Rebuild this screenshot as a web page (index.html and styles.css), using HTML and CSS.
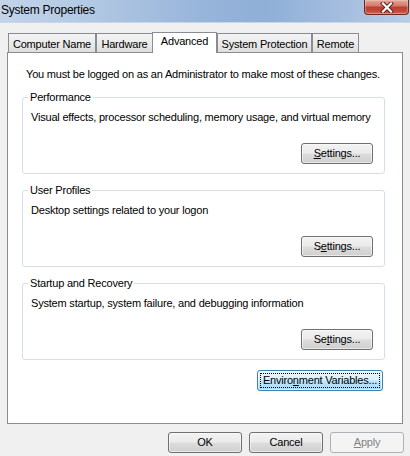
FILE: index.html
```html
<!DOCTYPE html>
<html>
<head>
<meta charset="utf-8">
<link rel="stylesheet" href="styles.css">
</head>
<body>
<div class="window">
  <div class="titlebar">
    <span class="title">System Properties</span>
    <div class="close">
      <svg width="14" height="11" viewBox="0 0 14 11">
        <path d="M3 1.5 L11 9.5 M11 1.5 L3 9.5" stroke="#5a1d16" stroke-width="4" stroke-linecap="square"/>
        <path d="M3 1.5 L11 9.5 M11 1.5 L3 9.5" stroke="#ffffff" stroke-width="2.2" stroke-linecap="square"/>
      </svg>
    </div>
  </div>
  <div class="dialog">
    <div class="tabs">
      <div class="tab tab-cn">Computer Name</div>
      <div class="tab tab-hw">Hardware</div>
      <div class="tab tab-adv active">Advanced</div>
      <div class="tab tab-sp">System Protection</div>
      <div class="tab tab-rm">Remote</div>
    </div>
    <div class="panel">
      <p class="note">You must be logged on as an Administrator to make most of these changes.</p>
      <fieldset class="group">
        <legend>Performance</legend>
        <p class="desc">Visual effects, processor scheduling, memory usage, and virtual memory</p>
        <div class="actions"><button class="btn settings"><u>S</u>ettings...</button></div>
      </fieldset>
      <fieldset class="group">
        <legend>User Profiles</legend>
        <p class="desc">Desktop settings related to your logon</p>
        <div class="actions"><button class="btn settings">S<u>e</u>ttings...</button></div>
      </fieldset>
      <fieldset class="group">
        <legend>Startup and Recovery</legend>
        <p class="desc">System startup, system failure, and debugging information</p>
        <div class="actions"><button class="btn settings">Se<u>t</u>tings...</button></div>
      </fieldset>
      <div class="env-row"><button class="btn env focused">Enviro<u>n</u>ment Variables...</button></div>
    </div>
    <div class="footer">
      <button class="btn dlg">OK</button>
      <button class="btn dlg">Cancel</button>
      <button class="btn dlg" disabled><u>A</u>pply</button>
    </div>
  </div>
</div>
</body>
</html>
```
FILE: styles.css
```css
* { box-sizing: border-box; }
html, body { margin: 0; padding: 0; }
body {
  font-family: "Liberation Sans", Arial, sans-serif;
  font-size: 11px;
  letter-spacing: -0.2px;
  color: #000;
  background: #f0f0f0;
}
.window {
  width: 410px;
  height: 456px;
  background: #f0f0f0;
  overflow: hidden;
}
.titlebar {
  height: 23px;
  display: flex;
  align-items: flex-start;
  background: linear-gradient(90deg, #c3d4ea 0%, #b2c8e3 22%, #97b4da 50%, #8fafd7 65%, #a7bfdf 85%, #b9cce5 100%);
  border-bottom: 1px solid #c9d6e6;
}
.title {
  font-size: 12px;
  letter-spacing: -0.25px;
  line-height: 14px;
  padding: 3px 0 0 1px;
}
.close {
  margin-left: auto;
  margin-right: 1px;
  width: 45px;
  height: 15px;
  border: 1px solid #6b2b22;
  border-top: none;
  border-radius: 0 0 4px 4px;
  background: linear-gradient(#e3a79c 0%, #d47c6d 40%, #bd3f30 52%, #c24a3a 80%, #d66b5a 100%);
  box-shadow: inset 0 0 0 1px rgba(255, 220, 210, 0.35);
  display: flex;
  align-items: center;
  justify-content: center;
}
.close svg { display: block; }
.dialog {
  padding: 0 7px;
}
.tabs {
  display: flex;
  align-items: flex-end;
  margin: 9px 0 0 1px;
  height: 20px;
}
.tab {
  height: 19px;
  border: 1px solid #898c95;
  border-bottom: none;
  background: linear-gradient(#f3f3f3 0%, #ebebeb 50%, #dedede 100%);
  text-align: center;
  padding-top: 4px;
  line-height: 13px;
  white-space: nowrap;
}
.tab.active {
  height: 21px;
  margin-bottom: -1px;
  padding-top: 2px;
  background: #ffffff;
  position: relative;
  z-index: 1;
}
.tab-cn { width: 88px; }
.tab-hw { width: 57px; margin-right: -1px; }
.tab-adv { width: 65px; }
.tab-sp { width: 95px; }
.tab-rm { width: 47px; }
.panel {
  height: 372px;
  border: 1px solid #898c95;
  background: #ffffff;
  padding: 15px 17px 0 14px;
}
.note {
  margin: 0 0 10px 0;
  padding-left: 4px;
  line-height: 13px;
}
.group {
  margin: 0 0 10px 0;
  border: 1px solid #d5dfe5;
  border-radius: 3px;
  padding: 0 11px 9px 8px;
  min-width: 0;
}
.group legend {
  padding: 0 2px;
  margin-left: -3px;
  line-height: 13px;
}
.desc {
  margin: 7px 0 0 0;
  line-height: 13px;
}
.actions {
  display: flex;
  justify-content: flex-end;
  margin-top: 19px;
}
.btn {
  font-family: inherit;
  font-size: 11px;
  letter-spacing: -0.2px;
  color: #000;
  height: 21px;
  padding: 0;
  border: 1px solid #707070;
  border-radius: 3px;
  background: linear-gradient(#f2f2f2 0%, #ebebeb 48%, #dddddd 52%, #cfcfcf 100%);
  box-shadow: inset 0 0 0 1px rgba(255, 255, 255, 0.55);
  line-height: 13px;
}
.btn.settings { width: 72px; }
.env-row {
  display: flex;
  justify-content: flex-end;
  margin: 4px 2px 0 0;
}
.btn.env { width: 126px; }
.btn.focused {
  border-color: #3c7fb1;
  background: linear-gradient(#eaf6fd 0%, #d9f0fc 48%, #bee6fd 52%, #a7d9f5 100%);
  outline: 1px dotted #000;
  outline-offset: -4px;
}
.footer {
  display: flex;
  justify-content: flex-end;
  gap: 7px;
  margin: 8px -1px 0 0;
}
.btn.dlg { width: 74px; }
.btn:disabled {
  border-color: #adb2b5;
  background: #f4f4f4;
  color: #838383;
  box-shadow: none;
}
```
